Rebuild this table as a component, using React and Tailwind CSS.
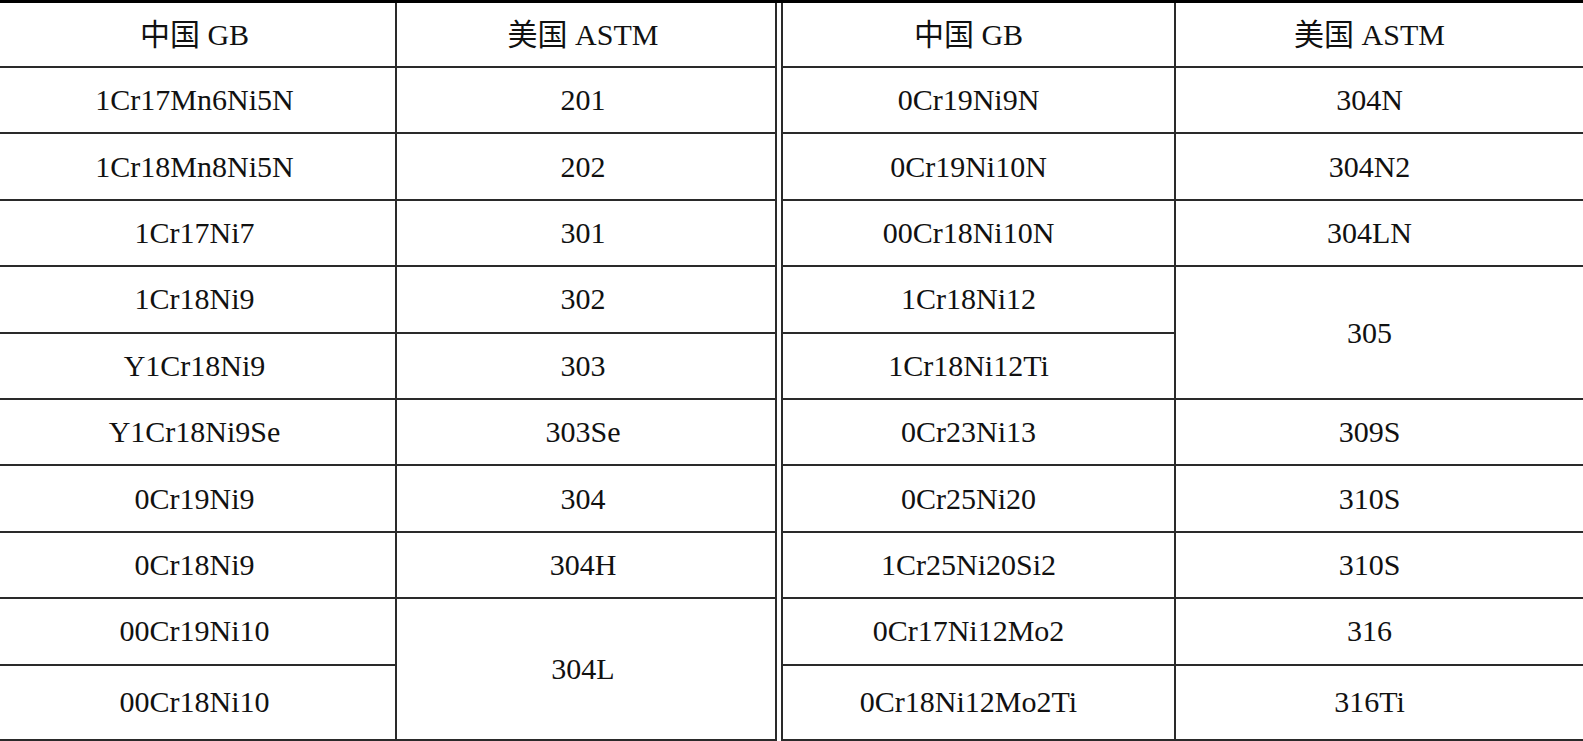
const left = [
  ['1Cr17Mn6Ni5N', '201'],
  ['1Cr18Mn8Ni5N', '202'],
  ['1Cr17Ni7', '301'],
  ['1Cr18Ni9', '302'],
  ['Y1Cr18Ni9', '303'],
  ['Y1Cr18Ni9Se', '303Se'],
  ['0Cr19Ni9', '304'],
  ['0Cr18Ni9', '304H'],
  ['00Cr19Ni10', '304L'],
  ['00Cr18Ni10', null],
]

const right = [
  ['0Cr19Ni9N', '304N'],
  ['0Cr19Ni10N', '304N2'],
  ['00Cr18Ni10N', '304LN'],
  ['1Cr18Ni12', '305'],
  ['1Cr18Ni12Ti', null],
  ['0Cr23Ni13', '309S'],
  ['0Cr25Ni20', '310S'],
  ['1Cr25Ni20Si2', '310S'],
  ['0Cr17Ni12Mo2', '316'],
  ['0Cr18Ni12Mo2Ti', '316Ti'],
]

const rows = 'grid-rows-[65px_repeat(9,66.4px)_75px]'

function Cell({ children, last, span, shift }) {
  return (
    <div
      className={`flex items-center justify-center border-b-2 border-[#2a2a2a] ${last ? '' : 'border-r-2'} ${span ? 'row-span-2' : ''} ${shift}`}
    >
      {children}
    </div>
  )
}

function Half({ data, cols, shift, edge }) {
  return (
    <div className={`grid ${cols} ${rows} ${edge}`}>
      <Cell shift={shift}>中国 GB</Cell>
      <Cell shift={shift} last>美国 ASTM</Cell>
      {data.map(([gb, astm], i) => (
        <>
          <Cell key={'g' + i} shift={shift}>{gb}</Cell>
          {astm !== null && (
            <Cell key={'a' + i} shift={shift} last span={i < data.length - 1 && data[i + 1][1] === null}>
              {astm}
            </Cell>
          )}
        </>
      ))}
    </div>
  )
}

export default function App() {
  return (
    <div
      className="w-[1583px] h-[741px] bg-white text-[#111] text-[30px] leading-none overflow-hidden"
      style={{ fontFamily: '"Liberation Serif", "Noto Sans CJK SC", serif' }}
    >
      <div className="flex border-t-[3px] border-black">
        <div className="w-[777px] border-r-2 border-[#2a2a2a]">
          <Half data={left} cols="grid-cols-[397px_1fr]" shift="pr-1.5" edge="" />
        </div>
        <div className="w-[4px]" />
        <div className="flex-1 border-l-2 border-[#2a2a2a]">
          <Half data={right} cols="grid-cols-[393px_1fr]" shift="pr-5" edge="" />
        </div>
      </div>
    </div>
  )
}
